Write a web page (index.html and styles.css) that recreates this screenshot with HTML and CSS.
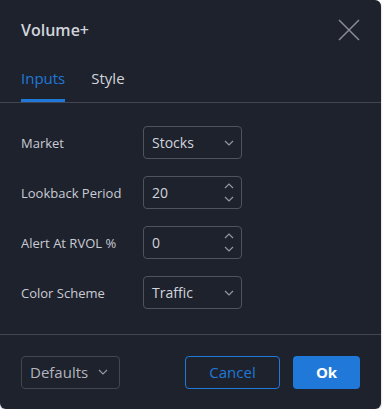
FILE: index.html
```html
<!DOCTYPE html>
<html lang="en">
<head>
    <meta charset="UTF-8">
    <title>Volume+</title>
    <link rel="stylesheet" href="styles.css">
</head>
<body>
    <div class="dialog">
        <div class="dialog-header">
            <div class="title">Volume+</div>
            <svg class="close" width="22" height="22" viewBox="0 0 22 22">
                <path d="M1 1 L21 21 M21 1 L1 21" stroke="#8a8d98" stroke-width="1.5" fill="none"/>
            </svg>
        </div>
        <div class="tabs">
            <div class="tab active">Inputs</div>
            <div class="tab">Style</div>
        </div>
        <div class="body">
            <div class="row">
                <div class="label">Market</div>
                <div class="field">
                    <span>Stocks</span>
                    <svg class="caret" width="10" height="6" viewBox="0 0 10 6"><path d="M1 1 L5 5 L9 1" stroke="#9598a1" stroke-width="1.2" fill="none"/></svg>
                </div>
            </div>
            <div class="row">
                <div class="label">Lookback Period</div>
                <div class="field number">
                    <span>20</span>
                    <div class="spin">
                        <svg width="10" height="6" viewBox="0 0 10 6"><path d="M1 5 L5 1 L9 5" stroke="#9598a1" stroke-width="1.2" fill="none"/></svg>
                        <svg width="10" height="6" viewBox="0 0 10 6"><path d="M1 1 L5 5 L9 1" stroke="#9598a1" stroke-width="1.2" fill="none"/></svg>
                    </div>
                </div>
            </div>
            <div class="row">
                <div class="label">Alert At RVOL %</div>
                <div class="field number">
                    <span>0</span>
                    <div class="spin">
                        <svg width="10" height="6" viewBox="0 0 10 6"><path d="M1 5 L5 1 L9 5" stroke="#9598a1" stroke-width="1.2" fill="none"/></svg>
                        <svg width="10" height="6" viewBox="0 0 10 6"><path d="M1 1 L5 5 L9 1" stroke="#9598a1" stroke-width="1.2" fill="none"/></svg>
                    </div>
                </div>
            </div>
            <div class="row">
                <div class="label">Color Scheme</div>
                <div class="field">
                    <span>Traffic</span>
                    <svg class="caret" width="10" height="6" viewBox="0 0 10 6"><path d="M1 1 L5 5 L9 1" stroke="#9598a1" stroke-width="1.2" fill="none"/></svg>
                </div>
            </div>
        </div>
        <div class="footer">
            <div class="defaults">
                <span>Defaults</span>
                <svg class="caret" width="10" height="6" viewBox="0 0 10 6"><path d="M1 1 L5 5 L9 1" stroke="#9598a1" stroke-width="1.2" fill="none"/></svg>
            </div>
            <div class="buttons">
                <button class="btn cancel">Cancel</button>
                <button class="btn ok">Ok</button>
            </div>
        </div>
    </div>
</body>
</html>
```

FILE: styles.css
```css
body {
    margin: 0;
    padding: 0;
    background: #ffffff;
    font-family: "Open Sans", Roboto, sans-serif;
    color: #d1d4dc;
}
.dialog {
    width: 381px;
    height: 409px;
    background: #1e222d;
    border-radius: 0 6px 6px 6px;
    display: flex;
    flex-direction: column;
    box-shadow: 0 1px 2px rgba(0, 0, 0, 0.3);
}
.dialog-header {
    display: flex;
    align-items: center;
    justify-content: space-between;
    height: 60px;
    padding: 0 21px;
}
.title {
    font-size: 16px;
    font-weight: 600;
    color: #d1d4dc;
}
.tabs {
    display: flex;
    gap: 26px;
    padding: 0 21px;
    height: 42px;
    border-bottom: 1px solid #434651;
}
.tab {
    font-size: 15px;
    font-weight: 500;
    color: #d1d4dc;
    padding-top: 8px;
    box-sizing: border-box;
    height: 42px;
}
.tab.active {
    color: #2079d8;
    border-bottom: 3px solid #2079d8;
}
.body {
    flex-grow: 1;
    padding: 23px 21px 0;
    display: flex;
    flex-direction: column;
    gap: 17px;
    border-bottom: 1px solid #434651;
}
.row {
    display: flex;
    align-items: center;
    height: 33px;
}
.label {
    width: 122px;
    font-size: 13px;
    color: #c9ccd4;
}
.field {
    width: 99px;
    height: 33px;
    box-sizing: border-box;
    border: 1px solid #50535e;
    border-radius: 4px;
    display: flex;
    align-items: center;
    justify-content: space-between;
    padding: 0 7px 0 8px;
    font-size: 14px;
}
.spin {
    display: flex;
    flex-direction: column;
    gap: 7px;
}
.footer {
    height: 74px;
    display: flex;
    align-items: center;
    justify-content: space-between;
    padding: 0 21px;
}
.defaults {
    width: 99px;
    height: 33px;
    box-sizing: border-box;
    border: 1px solid #434651;
    border-radius: 4px;
    display: flex;
    align-items: center;
    gap: 10px;
    padding-left: 8px;
    font-size: 15px;
    color: #b2b5be;
}
.buttons {
    display: flex;
    gap: 13px;
}
.btn {
    height: 33px;
    border-radius: 4px;
    font-family: "Open Sans", Roboto, sans-serif;
    font-size: 15px;
    cursor: pointer;
}
.cancel {
    width: 95px;
    background: none;
    border: 1px solid #2079d8;
    color: #2079d8;
}
.ok {
    width: 67px;
    background: #2079d8;
    border: none;
    color: #ffffff;
    font-weight: bold;
}
```
